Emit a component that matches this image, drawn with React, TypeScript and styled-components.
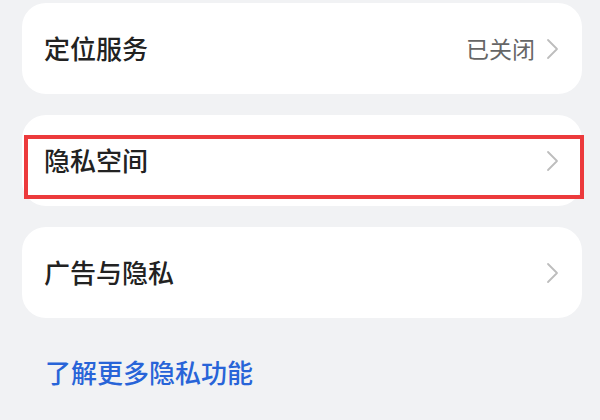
import React from "react";
import styled, { createGlobalStyle } from "styled-components";

const Global = createGlobalStyle`
  html, body {
    margin: 0;
    padding: 0;
    background: #f1f2f4;
  }
  body {
    font-family: "Noto Sans CJK SC", "Noto Sans", sans-serif;
  }
`;

const Page = styled.div`
  width: 600px;
  height: 420px;
  box-sizing: border-box;
  padding: 3px 18px 0 22px;
  display: flex;
  flex-direction: column;
  gap: 21px;
  background: #f1f2f4;
  overflow: hidden;
`;

const Card = styled.div`
  position: relative;
  height: 91px;
  box-sizing: border-box;
  background: #ffffff;
  border-radius: 24px;
  padding: 0 23px 0 22px;
  display: flex;
  align-items: center;
  justify-content: space-between;
`;

const Label = styled.span`
  font-size: 26px;
  line-height: 1.2;
  color: #222222;
  font-weight: 500;
  margin-top: -2px;
`;

const Right = styled.div`
  display: flex;
  align-items: center;
  gap: 11px;
`;

const Value = styled.span`
  font-size: 23px;
  line-height: 1.2;
  color: #666666;
`;

const Highlight = styled.div`
  position: absolute;
  left: 2px;
  right: -2px;
  top: 20px;
  height: 64px;
  box-sizing: border-box;
  border: 4px solid #ec3a3c;
  pointer-events: none;
`;

const Link = styled.a`
  margin-top: 17px;
  padding-left: 23px;
  font-size: 26px;
  line-height: 1.2;
  color: #2864d8;
  font-weight: 500;
  text-decoration: none;
`;

const Chevron = () => (
  <svg width="13" height="22" viewBox="0 0 13 22" fill="none">
    <path
      d="M2 2 L11 11 L2 20"
      stroke="#bdbdbd"
      strokeWidth="1.8"
      strokeLinecap="round"
      strokeLinejoin="round"
    />
  </svg>
);

export default function App() {
  return (
    <>
      <Global />
      <Page>
        <Card>
          <Label>定位服务</Label>
          <Right>
            <Value>已关闭</Value>
            <Chevron />
          </Right>
        </Card>
        <Card>
          <Label>隐私空间</Label>
          <Right>
            <Chevron />
          </Right>
          <Highlight />
        </Card>
        <Card>
          <Label>广告与隐私</Label>
          <Right>
            <Chevron />
          </Right>
        </Card>
        <Link href="#">了解更多隐私功能</Link>
      </Page>
    </>
  );
}
